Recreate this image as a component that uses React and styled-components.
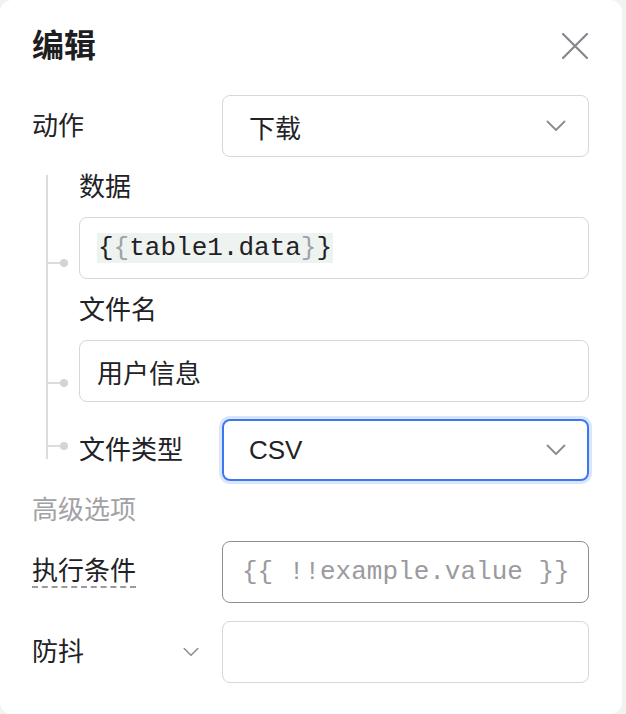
import React from "react";
import styled, { createGlobalStyle, css } from "styled-components";

const GlobalStyle = createGlobalStyle`
  body {
    margin: 0;
    background: #f1f3f1;
    font-family: "Liberation Sans", "Noto Sans CJK SC", sans-serif;
    color: #222226;
  }
`;

const Panel = styled.div`
  width: 622px;
  height: 714px;
  box-sizing: border-box;
  background: #ffffff;
  border-radius: 12px;
  padding: 24px 33px 0 32px;
`;

const Header = styled.div`
  display: flex;
  align-items: center;
  justify-content: space-between;
  height: 44px;
`;

const Title = styled.div`
  font-size: 32px;
  font-weight: 700;
  line-height: 44px;
  color: #1e1e22;
`;

const CloseButton = styled.button`
  width: 30px;
  height: 30px;
  padding: 0;
  border: none;
  background: none;
  display: flex;
  align-items: center;
  justify-content: center;
  margin-right: -1px;
`;

const Row = styled.div`
  display: flex;
  align-items: center;
  margin-top: ${(p) => p.$gap || 0}px;
`;

const Label = styled.div`
  width: ${(p) => p.$width || 190}px;
  flex-shrink: 0;
  font-size: 26px;
  line-height: 36px;
`;

const FieldLabel = styled.div`
  font-size: 26px;
  line-height: 36px;
  margin-bottom: 12px;
`;

const Select = styled.div`
  flex: 1;
  height: 62px;
  box-sizing: border-box;
  border: 1px solid #d6d6db;
  border-radius: 8px;
  padding: 0 22px 0 26px;
  display: flex;
  align-items: center;
  justify-content: space-between;
  font-size: 26px;
  ${(p) =>
    p.$focused &&
    css`
      border: 2px solid #3b78f0;
      padding-left: 25px;
      padding-right: 21px;
      box-shadow: 0 0 0 3px #dbe6fc;
    `}
`;

const Input = styled.div`
  flex: 1;
  height: 62px;
  box-sizing: border-box;
  border: 1px solid ${(p) => (p.$hover ? "#8d8d95" : "#d6d6db")};
  border-radius: 8px;
  padding-left: ${(p) => (p.$hover ? 19 : 17)}px;
  display: flex;
  align-items: center;
  font-size: 26px;
`;

const CodeChip = styled.span`
  font-family: "Liberation Mono", monospace;
  font-size: 26px;
  line-height: 30px;
  background: #eef3ef;
  padding: 0 1px;
  color: #222226;
`;

const Brace = styled.span`
  color: #9ea2a8;
`;

const Placeholder = styled.span`
  font-family: "Liberation Mono", monospace;
  font-size: 26px;
  color: #9a9aa0;
  white-space: nowrap;
`;

const Tree = styled.div`
  position: relative;
  margin-top: 12px;
  padding-left: 47px;

  &::before {
    content: "";
    position: absolute;
    left: 14px;
    top: 6px;
    bottom: 22px;
    width: 2px;
    background: #dcdce0;
  }
`;

const TreeItem = styled.div`
  position: relative;
  margin-top: ${(p) => p.$gap || 0}px;

  &::before {
    content: "";
    position: absolute;
    left: -33px;
    top: ${(p) => p.$dot}px;
    width: 16px;
    height: 2px;
    background: #dcdce0;
  }
  &::after {
    content: "";
    position: absolute;
    left: -19px;
    top: ${(p) => p.$dot - 3}px;
    width: 8px;
    height: 8px;
    border-radius: 50%;
    background: #d3d3d8;
  }
`;

const Muted = styled.div`
  margin-top: 11px;
  font-size: 26px;
  line-height: 36px;
  color: #a2a2a6;
`;

const DashedLabel = styled.div`
  width: 190px;
  flex-shrink: 0;
  font-size: 26px;

  span {
    display: inline-block;
    line-height: 30px;
    border-bottom: 2px dashed #9a9aa0;
  }
`;

const LabelGroup = styled.div`
  width: 190px;
  flex-shrink: 0;
  display: flex;
  align-items: center;
  justify-content: space-between;
  padding-right: 23px;
  box-sizing: border-box;
  font-size: 26px;
  line-height: 36px;
`;

const Chevron = ({ size = 20 }) => (
  <svg width={size} height={size / 2 + 2} viewBox="0 0 20 12" fill="none">
    <path d="M1.5 1.5 L10 10 L18.5 1.5" stroke="#8a8a92" strokeWidth="1.8" strokeLinecap="round" strokeLinejoin="round" />
  </svg>
);

const CloseIcon = () => (
  <svg width="26" height="26" viewBox="0 0 26 26" fill="none">
    <path d="M1 1 L25 25 M25 1 L1 25" stroke="#86868f" strokeWidth="2.2" strokeLinecap="round" />
  </svg>
);

export default function App() {
  return (
    <>
      <GlobalStyle />
      <Panel>
        <Header>
          <Title>编辑</Title>
          <CloseButton>
            <CloseIcon />
          </CloseButton>
        </Header>

        <Row $gap={27}>
          <Label>动作</Label>
          <Select>
            <span>下载</span>
            <Chevron />
          </Select>
        </Row>

        <Tree>
          <TreeItem $dot={93}>
            <FieldLabel>数据</FieldLabel>
            <Input>
              <CodeChip>
                {"{"}
                <Brace>{"{"}</Brace>
                table1.data
                <Brace>{"}"}</Brace>
                {"}"}
              </CodeChip>
            </Input>
          </TreeItem>
          <TreeItem $gap={13} $dot={90}>
            <FieldLabel>文件名</FieldLabel>
            <Input>用户信息</Input>
          </TreeItem>
          <TreeItem $gap={17} $dot={26}>
            <Row>
              <Label $width={143}>文件类型</Label>
              <Select $focused>
                <span>CSV</span>
                <Chevron />
              </Select>
            </Row>
          </TreeItem>
        </Tree>

        <Muted>高级选项</Muted>

        <Row $gap={13}>
          <DashedLabel>
            <span>执行条件</span>
          </DashedLabel>
          <Input $hover>
            <Placeholder>{"{{ !!example.value }}"}</Placeholder>
          </Input>
        </Row>

        <Row $gap={18}>
          <LabelGroup>
            <span>防抖</span>
            <Chevron size={16} />
          </LabelGroup>
          <Input />
        </Row>
      </Panel>
    </>
  );
}
